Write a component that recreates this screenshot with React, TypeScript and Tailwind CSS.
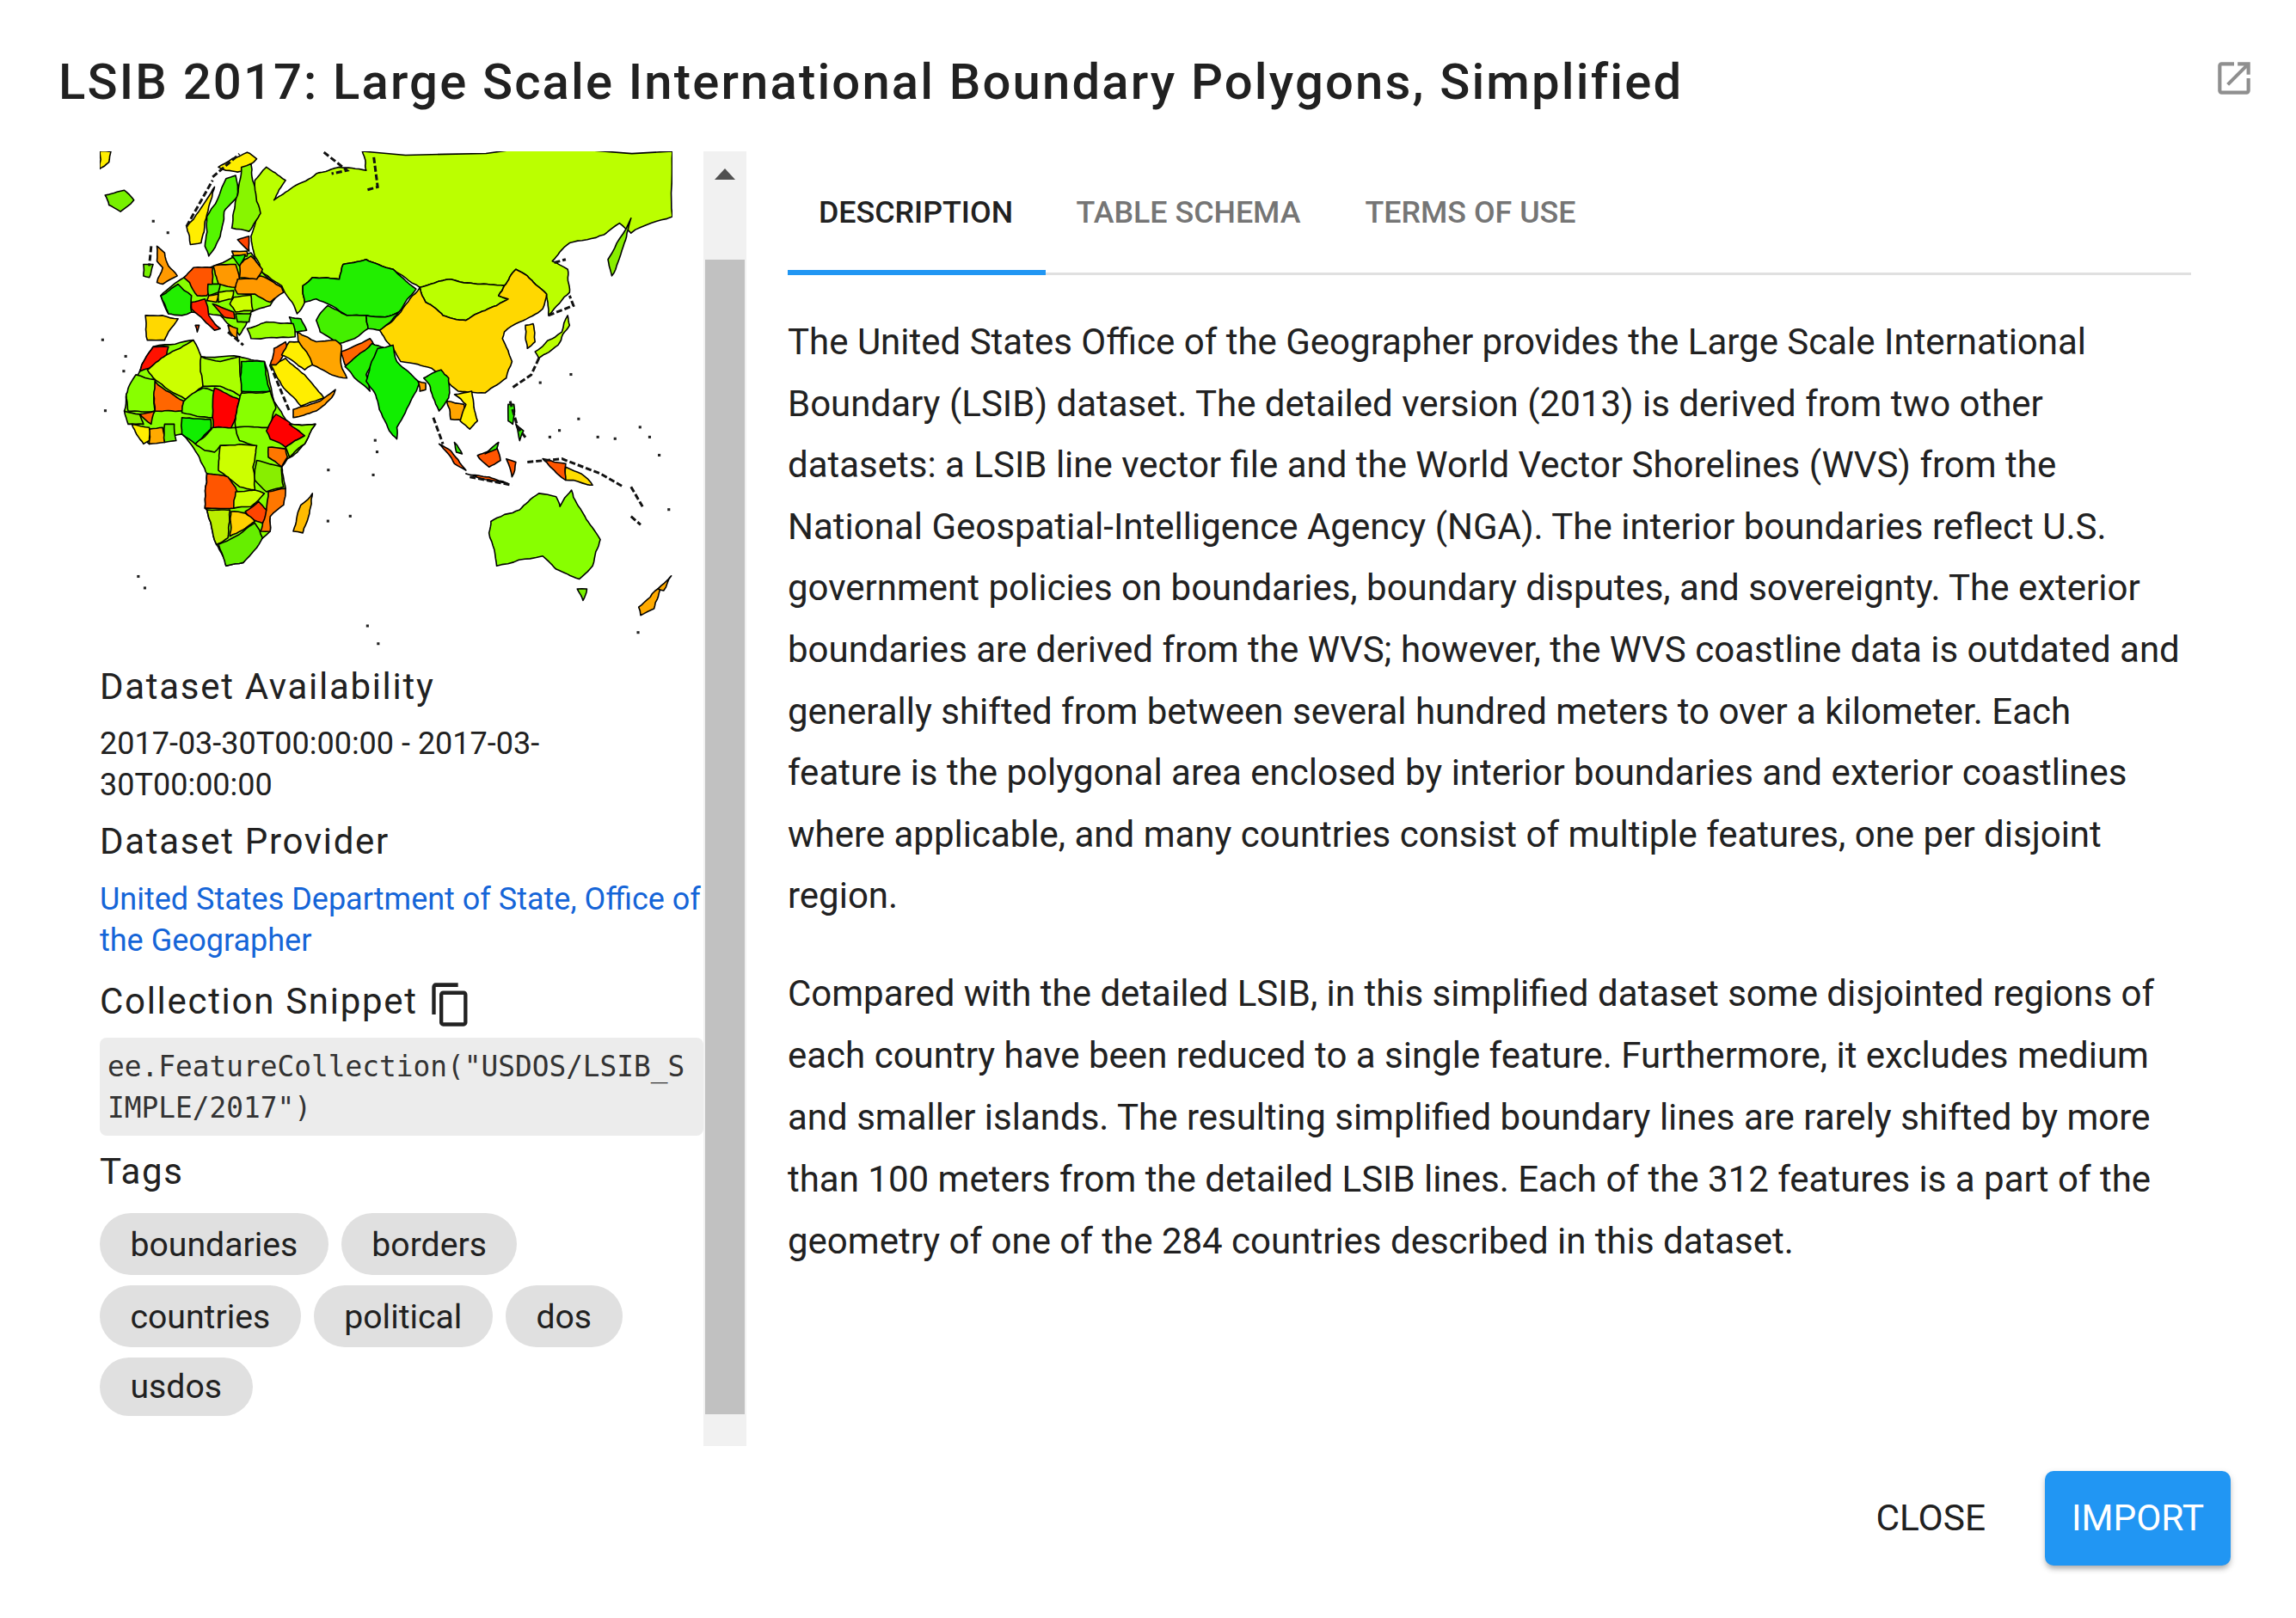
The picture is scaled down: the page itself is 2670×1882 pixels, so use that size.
const regions: [string, string][] = [
  // land under africa and europe, so small gaps don't show white
  ["#88ff00", "140,710 175,635 280,615 300,665 400,665 465,680 490,800 530,870 598,870 570,930 525,975 510,1000 520,1065 480,1150 480,1195 410,1290 365,1300 340,1235 315,1130 310,1125 315,1020 290,960 250,900 165,930 120,870 100,830 105,780"],
  ["#88ff00", "215,535 195,480 255,425 332,390 430,350 460,410 510,455 480,510 430,530 400,600 350,540 275,530"],
  // greenland corner, iceland
  ["#ffee00", "36,42 65,42 60,75 36,95"],
  ["#77f000", "50,175 100,160 125,190 90,225 60,205"],
  // russia + mongolia
  ["#bbff00", "720,42 1528,42 1528,240 1420,290 1390,260 1350,295 1260,320 1215,375 1255,400 1260,470 1205,540 1200,475 1150,420 1120,400 1090,450 1020,445 950,430 870,455 800,400 730,370 670,385 660,430 590,425 565,450 570,500 550,535 530,490 510,450 460,410 440,360 430,300 450,230 440,130 470,90 520,130 490,190 540,150 600,110 660,90 730,100"],
  ["#bbff00", "870,455 950,430 1020,445 1090,450 1075,480 1100,490 1040,525 990,555 930,540 885,500"],
  ["#88ee00", "1360,370 1420,245 1400,330 1370,420"],
  ["#ffd800", "765,585 820,530 870,455 885,500 930,540 990,555 1040,525 1100,490 1075,480 1090,450 1120,400 1150,420 1200,475 1190,520 1130,560 1090,590 1085,610 1110,680 1095,730 1040,775 970,770 900,700 820,680 800,640"],
  ["#22ee00", "565,450 590,425 660,430 670,385 730,370 800,400 860,460 815,530 780,545 730,540 680,540 640,510 600,490 570,500"],
  ["#44f000", "600,555 630,510 680,540 730,540 735,580 700,610 660,625 610,590"],
  ["#33ee00", "730,540 780,545 815,530 765,585 735,580"],
  ["#33ee00", "530,545 560,550 575,585 545,590"],
  ["#ffa500", "550,590 600,620 650,615 665,630 665,690 680,730 640,720 590,690 560,640"],
  ["#ff6600", "665,650 740,610 750,630 700,690 675,690"],
  ["#22ee00", "675,695 745,625 780,640 730,720 740,770 700,730"],
  ["#11ee00", "760,640 800,630 810,680 870,745 850,790 810,880 810,915 790,890 760,800 730,740"],
  ["#22ee00", "880,730 925,705 945,730 945,790 920,830 895,750"],
  ["#ff9900", "865,740 885,745 885,765 870,770"],
  ["#ffa500", "940,800 985,810 990,860 950,855"],
  ["#ffee00", "960,780 1005,770 1020,860 1000,885 975,860 990,810"],
  ["#ffee00", "480,690 520,670 570,720 620,790 560,815 515,760"],
  ["#ff9900", "540,825 610,800 650,765 640,790 600,830 540,850"],
  ["#99ff00", "420,580 470,560 540,565 545,605 430,610"],
  ["#ff6600", "490,640 520,620 525,640 495,690 480,690"],
  ["#ffee00", "510,660 530,620 555,620 590,690 570,705"],
  // europe
  ["#22ee00", "195,480 240,445 275,480 275,530 250,540 215,535 205,505"],
  ["#ffd800", "155,540 200,540 240,550 215,590 205,615 160,615"],
  ["#ff5500", "255,425 280,395 330,395 330,450 315,480 290,480 270,440"],
  ["#ff2200", "275,500 310,490 320,540 350,580 335,585 300,545 275,520"],
  ["#ff9900", "185,330 205,350 215,390 238,420 200,445 185,440 200,395 185,375"],
  ["#77f000", "150,385 175,385 165,425 150,420"],
  ["#ffee00", "262,270 325,170 335,150 320,210 310,255 300,320 272,325"],
  ["#ffee00", "345,90 420,45 445,65 410,100 395,105 365,100"],
  ["#55f500", "315,240 365,125 390,115 395,180 360,225 355,270 350,300 320,360 310,330"],
  ["#88f500", "395,175 405,90 430,80 440,150 455,230 425,285 380,275 385,225"],
  ["#ff9900", "332,390 390,385 400,430 390,455 345,445"],
  ["#ff9900", "395,430 455,420 510,455 515,470 480,500 440,475 395,475 388,460"],
  ["#ff9900", "400,385 430,360 460,400 445,430 400,425"],
  ["#ff4400", "395,310 425,300 425,345"],
  ["#ffaa00", "380,345 420,345 420,360 385,360"],
  ["#22ee00", "380,360 415,355 400,390"],
  ["#ccff00", "385,485 430,478 435,525 390,530 375,505"],
  ["#ccff00", "345,470 385,465 380,490 345,500"],
  ["#55f000", "318,445 350,445 345,470 320,480"],
  ["#ffcc00", "320,480 345,475 340,500 315,495"],
  ["#ff3300", "330,505 385,530 388,550 360,545"],
  ["#66f000", "390,535 430,535 425,560 395,560"],
  ["#ff9900", "370,570 395,580 395,610 380,600"],
  ["#ff4400", "285,570 295,570 290,590"],
  // africa
  ["#ff1100", "140,710 175,635 215,635 210,660 165,700"],
  ["#ccff00", "160,705 210,660 280,615 300,670 305,755 260,795 180,735"],
  ["#aaff00", "300,665 350,680 400,665 405,785 350,755 305,755"],
  ["#11ee00", "405,680 465,680 480,770 405,770"],
  ["#88ff00", "105,780 130,720 180,735 180,830 110,830"],
  ["#ff6600", "180,740 255,800 250,830 180,830 170,870 140,840 180,830"],
  ["#77ff00", "255,800 305,760 335,770 330,850 250,835"],
  ["#ff0000", "335,760 400,795 390,850 370,900 330,905 330,850"],
  ["#88ff00", "405,775 480,770 495,820 480,880 390,880 390,845 400,795"],
  ["#ff0000", "495,840 525,860 570,905 520,940 480,915 470,890"],
  ["#99ff00", "530,870 598,870 570,930 530,970 520,940 570,905"],
  ["#ff7700", "475,940 520,945 525,970 510,1000 475,970"],
  ["#11ee00", "250,850 325,855 325,885 285,930 250,900"],
  ["#88ff00", "285,930 330,880 390,880 400,920 440,935 350,935 335,955 310,950"],
  ["#ccff00", "350,935 445,935 435,1000 440,1070 400,1060 345,1010"],
  ["#88ee00", "445,980 510,1000 515,1060 470,1075 440,1040"],
  ["#ff5500", "315,1020 370,1030 395,1075 385,1125 310,1125"],
  ["#ccff00", "390,1075 440,1070 465,1080 430,1120 385,1125"],
  ["#ff7700", "475,1075 520,1065 515,1115 480,1150 480,1195 455,1195 470,1130"],
  ["#ff4400", "415,1135 450,1105 470,1130 460,1170 435,1160"],
  ["#bbee00", "315,1130 375,1130 370,1215 340,1235"],
  ["#ffd000", "378,1135 415,1140 440,1165 375,1210"],
  ["#66ee00", "345,1235 440,1170 460,1215 410,1290 365,1300"],
  ["#ffbb00", "560,1115 590,1080 580,1150 565,1200 540,1195"],
  ["#88ee00", "100,830 140,840 150,870 110,870"],
  ["#ffaa00", "165,885 200,880 205,925 165,930"],
  ["#66ee00", "205,870 230,870 235,920 205,925"],
  ["#ffee00", "120,870 165,880 165,920 150,930"],
  // se asia, oceania
  ["#ff5500", "920,930 950,950 990,1010 960,990"],
  ["#ff5500", "990,1020 1050,1030 1100,1050 1030,1035"],
  ["#ff5500", "1020,965 1070,940 1080,980 1050,1000"],
  ["#ff5500", "1095,975 1120,985 1110,1030"],
  ["#ff5500", "1190,975 1250,990 1250,1040 1210,1000"],
  ["#ffdd00", "1250,1000 1290,1020 1320,1055 1270,1040 1250,1040"],
  ["#33ee00", "1100,810 1115,810 1112,870 1100,860"],
  ["#33ee00", "1120,870 1140,890 1130,920"],
  ["#33ee00", "960,925 980,960 965,955"],
  ["#33ee00", "1040,960 1075,925 1070,945"],
  ["#bbff00", "1170,650 1240,590 1255,540 1260,570 1230,630 1180,670"],
  ["#ffdd00", "1145,570 1165,565 1170,620 1150,640"],
  ["#88ff00", "1055,1165 1130,1130 1180,1080 1225,1090 1235,1120 1265,1070 1300,1150 1340,1220 1320,1300 1285,1340 1225,1310 1190,1270 1070,1300 1050,1200"],
  ["#77f000", "1280,1370 1305,1370 1295,1405"],
  ["#ffaa00", "1440,1425 1500,1360 1480,1430 1445,1450"],
  ["#ffaa00", "1490,1370 1525,1330 1505,1375"],
];

const coast = [
  "M330 120 L400 50", "M262 270 L330 130", "M1205 540 L1270 510 L1260 480", "M1180 670 L1160 720 L1110 760",
  "M480 690 L530 830", "M1105 800 L1125 880 L1145 910", "M905 850 L930 930", "M1150 985 L1240 975 L1340 1020 L1400 1060",
  "M1000 1030 L1110 1055", "M620 45 L680 100 L640 110", "M750 60 L760 150 L730 160",
  "M1420 1060 L1450 1120", "M1420 1150 L1445 1175", "M170 330 L165 390", "M370 590 L410 630", "M1220 380 L1250 370",
];

const dots = [
  [47,825],[172,250],[210,285],[100,660],[40,610],[95,705],[133,1328],[150,1363],[730,1478],[758,1532],[1435,1498],[685,1145],[627,1160],[750,915],[755,950],[1205,905],[1280,850],[1330,905],[1375,910],[1440,875],[1465,905],[1490,960],[1515,1125],[1180,740],[1260,715],[1230,885],[745,1020],[628,1005],
];

// hash of a midpoint, so two countries sharing an edge get the same wobble
function wobble(x: number, y: number) {
  const h = Math.sin(Math.round(x) * 12.9898 + Math.round(y) * 78.233) * 43758.5453;
  return (h - Math.floor(h)) * 2 - 1;
}

function split(ax: number, ay: number, bx: number, by: number, depth: number): number[][] {
  const len = Math.hypot(bx - ax, by - ay);
  if (depth === 0 || len < 14) return [[bx, by]];
  const mx = (ax + bx) / 2;
  const my = (ay + by) / 2;
  const nx = mx + wobble(mx, my) * len * 0.05;
  const ny = my + wobble(my, mx) * len * 0.05;
  return [...split(ax, ay, nx, ny, depth - 1), ...split(nx, ny, bx, by, depth - 1)];
}

function roughen(points: string) {
  const pts = points.split(" ").map((p) => p.split(",").map(Number));
  const out: number[][] = [];
  pts.forEach((p, i) => {
    const q = pts[(i + 1) % pts.length];
    out.push(...split(p[0], p[1], q[0], q[1], 3));
  });
  return out.map((p) => `${p[0].toFixed(1)},${p[1].toFixed(1)}`).join(" ");
}

function WorldMap() {
  return (
    <svg viewBox="36 42 1492 1500" preserveAspectRatio="none" className="block h-[575px] w-[666px] blur-[0.6px]">
      {regions.map(([fill, points], i) => (
        <polygon key={i} points={roughen(points)} fill={fill} stroke="#000" strokeWidth="1.6" strokeLinejoin="round" vectorEffect="non-scaling-stroke" />
      ))}
      {coast.map((d, i) => (
        <path key={i} d={d} fill="none" stroke="#111" strokeWidth="3" strokeDasharray="7 3" vectorEffect="non-scaling-stroke" />
      ))}
      {dots.map(([x, y], i) => (
        <rect key={i} x={x} y={y} width="7" height="8" fill="#222" />
      ))}
    </svg>
  );
}

const firstPara = `The United States Office of the Geographer provides the Large Scale International Boundary (LSIB) dataset. The detailed version (2013) is derived from two other datasets: a LSIB line vector file and the World Vector Shorelines (WVS) from the National Geospatial-Intelligence Agency (NGA). The interior boundaries reflect U.S. government policies on boundaries, boundary disputes, and sovereignty. The exterior boundaries are derived from the WVS; however, the WVS coastline data is outdated and generally shifted from between several hundred meters to over a kilometer. Each feature is the polygonal area enclosed by interior boundaries and exterior coastlines where applicable, and many countries consist of multiple features, one per disjoint region.`;
const secondPara = `Compared with the detailed LSIB, in this simplified dataset some disjointed regions of each country have been reduced to a single feature. Furthermore, it excludes medium and smaller islands. The resulting simplified boundary lines are rarely shifted by more than 100 meters from the detailed LSIB lines. Each of the 312 features is a part of the geometry of one of the 284 countries described in this dataset.`;

const tags = ["boundaries", "borders", "countries", "political", "dos", "usdos"];

function Heading({ children, className }: { children: React.ReactNode; className: string }) {
  return <div className={`text-[42px] leading-[48px] tracking-[1.7px] text-[#212121] ${className}`}>{children}</div>;
}

export default function App() {
  return (
    <div className="flex h-[1882px] w-[2670px] flex-col overflow-hidden bg-white font-[Roboto,sans-serif] text-[#212121]">
      <header className="flex h-[176px] items-start justify-between pl-[68px] pr-[47px]">
        <h1 className="mt-[62px] text-[58px] font-medium leading-[66px] tracking-[2.15px]">
          LSIB 2017: Large Scale International Boundary Polygons, Simplified
        </h1>
        <svg viewBox="0 0 24 24" className="mt-[66px] h-[50px] w-[50px] fill-[#8f8f8f]">
          <path d="M14,3V5H17.59L7.76,14.83L9.17,16.24L19,6.41V10H21V3M19,19H5V5H12V3H5C3.89,3 3,3.9 3,5V19A2,2 0 0,0 5,21H19A2,2 0 0,0 21,19V12H19V19Z" />
        </svg>
      </header>

      <main className="flex h-[1506px] pl-[116px]">
        <aside className="w-[702px] shrink-0">
          <WorldMap />
          <Heading className="mt-[24px]">Dataset Availability</Heading>
          <p className="mt-[18px] text-[36px] leading-[48px]">2017-03-30T00:00:00 - 2017-03-<br />30T00:00:00</p>
          <Heading className="mt-[18px]">Dataset Provider</Heading>
          <p className="mt-[19px] text-[36px] leading-[48px] text-[#1565d8]">United States Department of State, Office of the Geographer</p>
          <div className="mt-[23px] flex h-[48px] items-center">
            <Heading className="">Collection Snippet</Heading>
            <svg viewBox="0 0 24 24" className="ml-[12px] mt-[6px] h-[55px] w-[52px] shrink-0 fill-[#222]" preserveAspectRatio="none">
              <path d="M19,21H8V7H19M19,5H8A2,2 0 0,0 6,7V21A2,2 0 0,0 8,23H19A2,2 0 0,0 21,21V7A2,2 0 0,0 19,5M16,1H4A2,2 0 0,0 2,3V17H4V3H16V1Z" />
            </svg>
          </div>
          <pre className="mt-[18px] whitespace-pre-wrap break-all rounded-[8px] bg-[#ececec] px-[9px] pb-[8px] pt-[10px] font-['DejaVu_Sans_Mono',monospace] text-[32.8px] leading-[48px] text-[#333]">ee.FeatureCollection("USDOS/LSIB_SIMPLE/2017")</pre>
          <Heading className="mt-[18px]">Tags</Heading>
          <div className="mt-[24px] flex flex-wrap gap-x-[15px] gap-y-[12px]">
            {tags.map((t) => (
              <span key={t} className="flex h-[72px] items-center rounded-full bg-[#e0e0e0] px-[35.5px] pt-[2px] text-[39.2px] last:h-[68px] last:pt-0">{t}</span>
            ))}
          </div>
        </aside>

        <div className="flex w-[50px] shrink-0 flex-col items-center bg-[#f1f1f1]">
          <div className="flex h-[126px] items-start pt-[20px]">
            <div className="h-0 w-0 border-x-[12px] border-b-[13px] border-x-transparent border-b-[#505050]" />
          </div>
          <div className="mb-[37px] w-[46px] flex-1 bg-[#c1c1c1]" />
        </div>

        <section className="ml-[48px] w-[1632px] shrink-0">
          <nav className="flex h-[144px] border-b-[3px] border-[#e0e0e0]">
            <div className="relative flex w-[298px] items-center justify-center pt-[2px] text-[35.8px] font-medium">
              DESCRIPTION
              <div className="absolute inset-x-0 -bottom-[3px] h-[6px] w-[300px] bg-[#2196f3]" />
            </div>
            <div className="flex w-[336px] items-center justify-center pt-[2px] text-[35.8px] font-medium text-[#757575]">TABLE SCHEMA</div>
            <div className="flex w-[320px] items-center justify-center pt-[2px] text-[35.8px] font-medium text-[#757575]">TERMS OF USE</div>
          </nav>
          <div className="pt-[42px] text-[42px] leading-[71.6px]">
            <p>{firstPara}</p>
            <p className="mt-[42px] leading-[72px]">{secondPara}</p>
          </div>
        </section>
      </main>

      <footer className="flex justify-end pr-[76px] pt-[29px]">
        <button className="flex h-[110px] items-center px-[32px] text-[42.4px] text-[#212121]">CLOSE</button>
        <button className="ml-[37px] flex h-[110px] w-[216px] items-center justify-center rounded-[10px] bg-[#2196f3] text-[42.4px] text-white shadow-[0_5px_6px_-2px_rgba(0,0,0,0.25),0_3px_8px_rgba(0,0,0,0.15)]">IMPORT</button>
      </footer>
    </div>
  );
}
